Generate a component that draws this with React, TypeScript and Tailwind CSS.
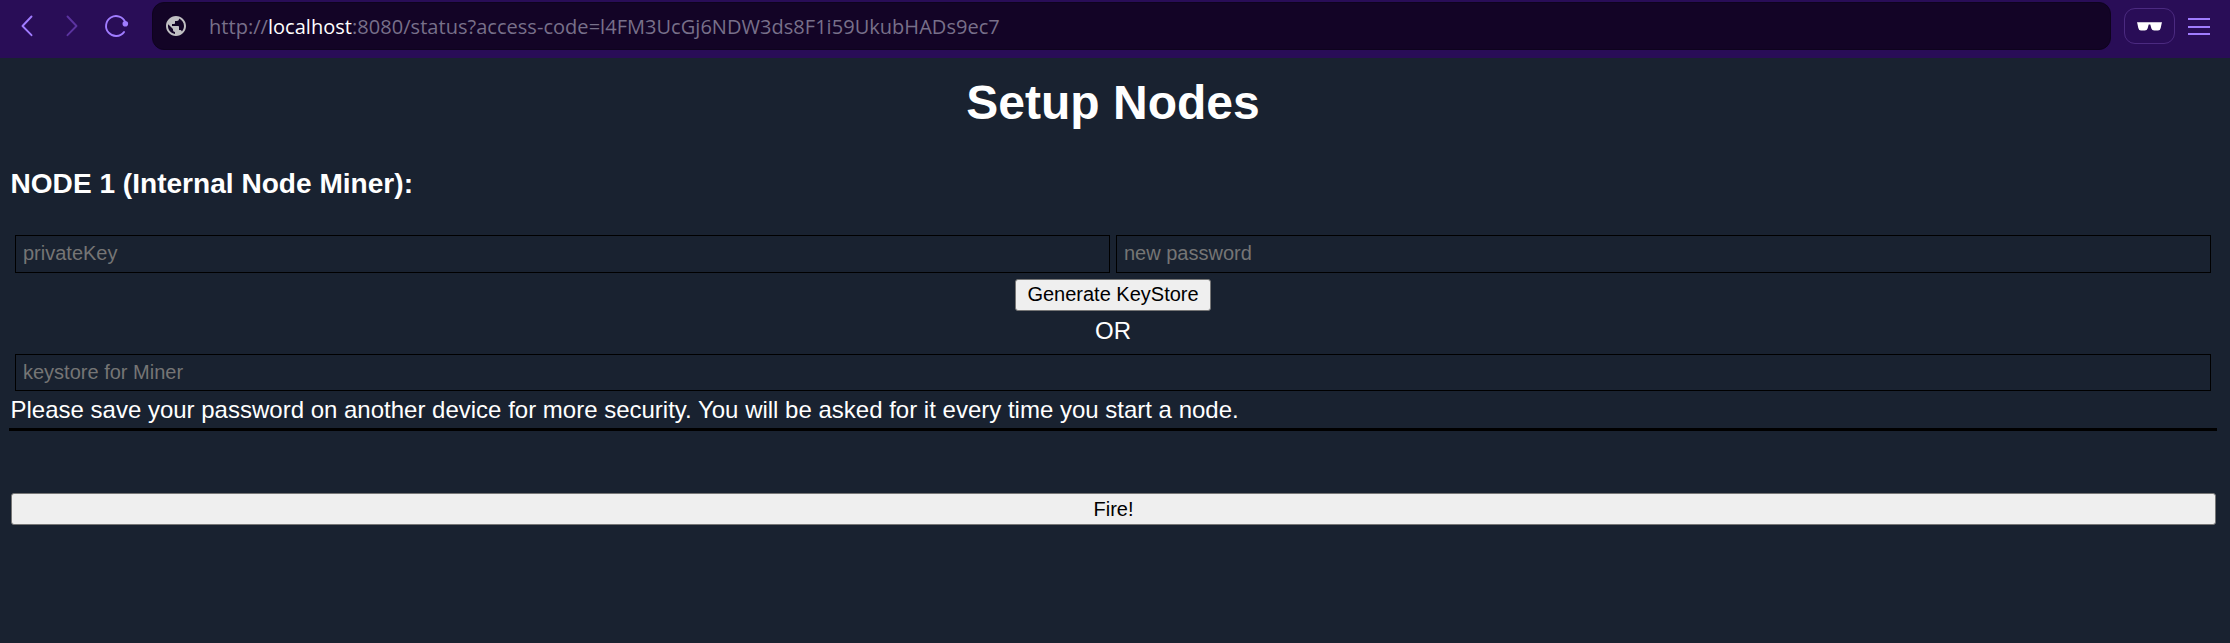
function BackForward() {
  return (
    <>
      <svg className="ml-5 h-[24px] w-[14px]" viewBox="0 0 14 24" fill="none" stroke="#a07cff" strokeWidth="1.9" strokeLinecap="round" strokeLinejoin="round">
        <path d="M11.500 2.500 2.500 12 11.500 21.200" />
      </svg>
      <svg className="ml-[31px] h-[24px] w-[14px]" viewBox="0 0 14 24" fill="none" stroke="#5b33a0" strokeWidth="1.9" strokeLinecap="round" strokeLinejoin="round">
        <path d="M2.500 2.500 11.500 12 2.500 21.200" />
      </svg>
    </>
  );
}

function Toolbar() {
  return (
    <header className="flex h-[58px] shrink-0 items-start bg-[#290d57]">
      <div className="flex h-[52px] w-[152px] shrink-0 items-center">
        <BackForward />
        <svg className="ml-[25px] h-6 w-6 overflow-visible" viewBox="0 0 24 24" fill="none" stroke="#a07cff" strokeWidth="1.9" strokeLinecap="round">
          <path d="M20 18.100A10 10 0 1 1 21.400 8.500" />
          <circle cx="21.300" cy="9.800" r="2.800" fill="#a07cff" stroke="none" />
        </svg>
      </div>
      <div className="mt-[2px] flex h-12 w-[1959px] shrink-0 items-center rounded-[12px] border border-[#0e031e] bg-[#130426]">
        <svg className="ml-[11px] h-6 w-6" viewBox="0 0 24 24" fill="#c0bfc2">
          <path d="M12 2C6.480 2 2 6.480 2 12s4.480 10 10 10 10-4.480 10-10S17.520 2 12 2zm-1 17.930c-3.950-.49-7-3.850-7-7.930 0-.62.080-1.210.210-1.790L9 15v1c0 1.100.9 2 2 2v1.930zm6.900-2.540c-.26-.81-1-1.390-1.900-1.390h-1v-3c0-.55-.45-1-1-1H8v-2h2c.55 0 1-.45 1-1V7h2c1.100 0 2-.9 2-2v-.41c2.930 1.190 5 4.060 5 7.410 0 2.080-.8 3.970-2.100 5.390z" />
        </svg>
        <span className="ml-[21px] mt-[2px] whitespace-nowrap font-['Open_Sans',sans-serif] text-[20px] leading-[30px] tracking-[0.035px] text-[#78708a]">
          http://<span className="text-white">localhost</span>:8080/status?access-code=l4FM3UcGj6NDW3ds8F1i59UkubHADs9ec7
        </span>
      </div>
      <div className="ml-[13px] mt-2 flex h-9 w-[51px] items-center justify-center rounded-[11px] border border-[#4b2a80]">
        <svg className="h-[9px] w-[25px]" viewBox="0 0 25 9" fill="white">
          <path d="M0 0.300H25L24.600 1.800 23.700 6Q23.200 8.500 21 8.500H17.200Q15 8.500 14.400 6.500L13.300 2.600H11.700L10.600 6.500Q10 8.500 7.800 8.500H4Q1.800 8.500 1.300 6L.4 1.800Z" />
        </svg>
      </div>
      <div className="ml-[13px] mt-[18px] flex w-[22px] flex-col gap-[5.500px]">
        <div className="h-[2px] bg-[#a07cff]" />
        <div className="h-[2px] bg-[#a07cff]" />
        <div className="h-[2px] bg-[#a07cff]" />
      </div>
    </header>
  );
}

const field =
  "block min-w-0 border border-black bg-transparent px-[7px] text-[20px] text-white outline-none placeholder:text-[#757575] placeholder:opacity-100";
const button =
  "flex items-center justify-center rounded-[3px] border border-[#767676] bg-[#efefef] text-[20px] text-black";

export default function App() {
  return (
    <div className="flex h-[643px] w-[2230px] flex-col overflow-hidden bg-[#192230] font-['Liberation_Sans',Arial,sans-serif] text-[24px] leading-[27px] text-white">
      <Toolbar />
      <main className="flex flex-col px-[11px]">
        <h1 className="mr-[4px] mt-[18px] text-center text-[48px] font-bold leading-[54px]">Setup Nodes</h1>
        <h3 className="-ml-[0.5px] mt-[38px] text-[28.080px] font-bold leading-[32px]">NODE 1 (Internal Node Miner):</h3>
        <div className="ml-1 mt-[35px] flex gap-[6px]">
          <input className={`${field} h-[38px] w-[1095px] pb-[2px]`} placeholder="privateKey" />
          <input className={`${field} h-[38px] w-[1095px] pb-[2px]`} placeholder="new password" />
        </div>
        <button className={`${button} ml-[1004px] mt-[6px] h-8 w-[196px] pb-[2px]`}>Generate KeyStore</button>
        <p className="mt-[6px] mr-[4px] text-center">OR</p>
        <input className={`${field} ml-1 mt-[10px] h-[37px] w-[2196px]`} placeholder="keystore for Miner" />
        <p className="-ml-[0.5px] mt-[5px]">Please save your password on another device for more security. You will be asked for it every time you start a node.</p>
        <div className="-ml-[2px] mt-[5px] h-[3px] w-[2208px] bg-black" />
        <button className={`${button} mt-[62px] h-8 w-[2205px]`}>Fire!</button>
      </main>
    </div>
  );
}
